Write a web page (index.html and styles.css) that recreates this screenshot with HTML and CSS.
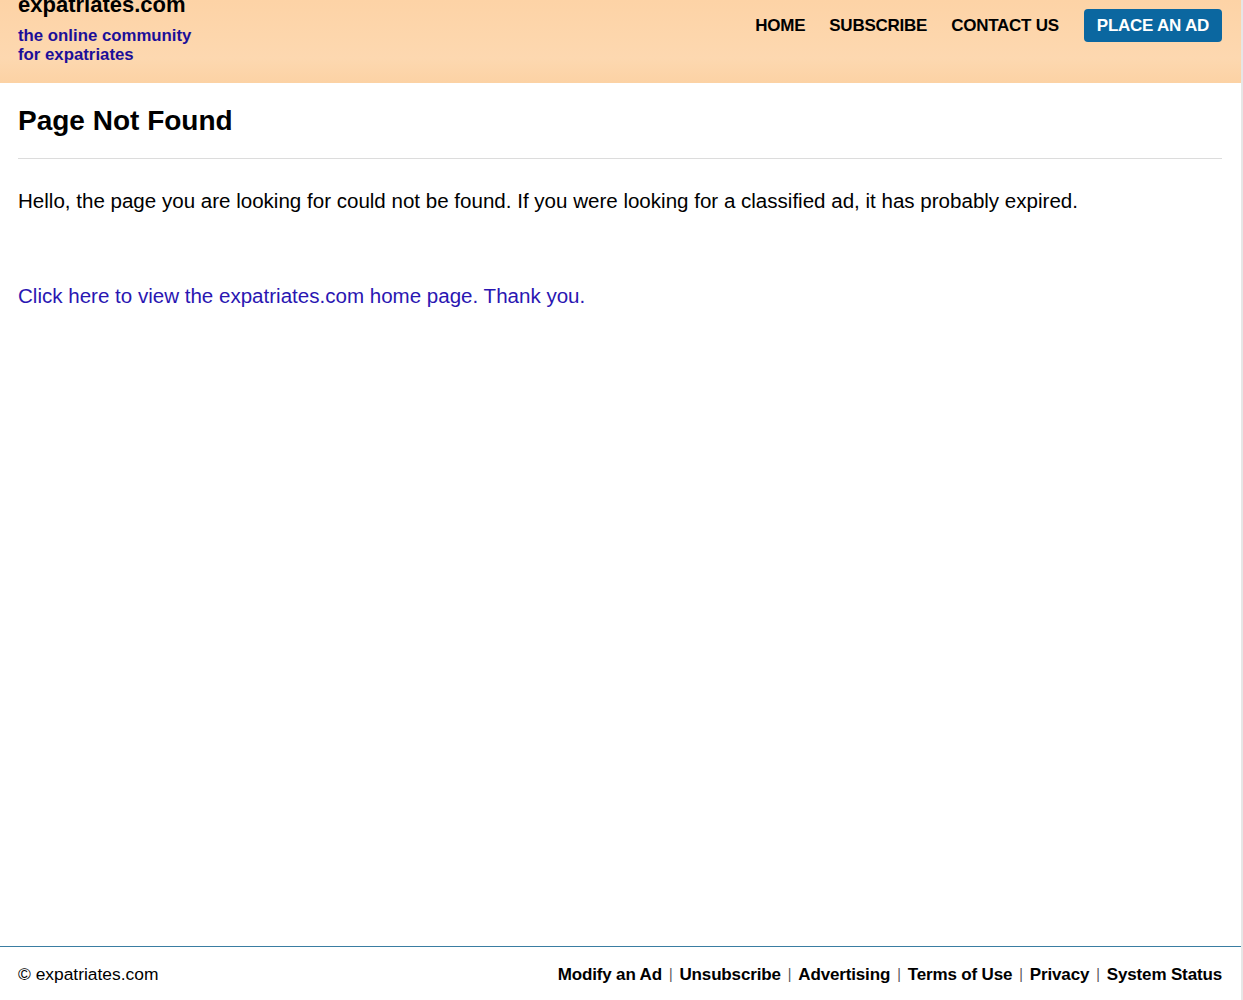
FILE: index.html
```html
<!DOCTYPE html>
<html lang="en">
<head>
    <meta charset="UTF-8">
    <meta name="viewport" content="width=device-width, initial-scale=1.0">
    <title>Page Not Found - expatriates.com</title>
    <link rel="stylesheet" href="styles.css">
</head>
<body>

    <!-- site header -->
    <header class="top-bar">
        <div class="brand">
            <a href="#" class="logo">expatriates.com</a>
            <div class="tagline">the online community<br>for expatriates</div>
        </div>
        <nav class="main-nav">
            <a href="#">HOME</a>
            <a href="#">SUBSCRIBE</a>
            <a href="#">CONTACT US</a>
            <a href="#" class="place-ad">PLACE AN AD</a>
        </nav>
    </header>

    <main class="content">
        <h1>Page Not Found</h1>
        <p class="message">Hello, the page you are looking for could not be found. If you were looking for a classified ad, it has probably expired.</p>
        <p class="home-link"><a href="#">Click here to view the expatriates.com home page. Thank you.</a></p>
    </main>

    <footer class="site-footer">
        <div class="copyright">&copy; expatriates.com</div>
        <div class="footer-links">
            <a href="#">Modify an Ad</a><span class="sep">|</span><a href="#">Unsubscribe</a><span class="sep">|</span><a href="#">Advertising</a><span class="sep">|</span><a href="#">Terms of Use</a><span class="sep">|</span><a href="#">Privacy</a><span class="sep">|</span><a href="#">System Status</a>
        </div>
    </footer>

</body>
</html>
```

FILE: styles.css
```css
html, body {
    margin: 0;
    padding: 0;
}
body {
    font-family: "Liberation Sans", Arial, Helvetica, sans-serif;
    color: #000;
    background: #fff;
    min-height: 100vh;
    display: flex;
    flex-direction: column;
    border-right: 2px solid #e6e6e6;
    box-sizing: border-box;
}
a {
    text-decoration: none;
}

/* header */
.top-bar {
    height: 83px;
    background: linear-gradient(to bottom, #fdd3a6, #fdd8b0 70%, #fcd2a4);
    display: flex;
    justify-content: space-between;
    align-items: flex-start;
    padding: 0 19px 0 18px;
    box-sizing: border-box;
    overflow: hidden;
}
.brand {
    margin-top: -10px;
}
.logo {
    display: block;
    color: #000;
    font-size: 22px;
    font-weight: bold;
    line-height: 30px;
    margin-bottom: 6px;
}
.tagline {
    color: #1c0f99;
    font-size: 16.8px;
    font-weight: bold;
    line-height: 19px;
}
.main-nav {
    display: flex;
    align-items: center;
    gap: 24px;
    margin-top: 9px;
}
.main-nav a {
    color: #000;
    font-size: 17px;
    font-weight: bold;
    letter-spacing: -0.25px;
}
.main-nav .place-ad {
    color: #fff;
    background: #0b67a0;
    border-radius: 4px;
    padding: 7px 13px;
    line-height: 19px;
    margin-left: 1px;
}

/* page body */
.content {
    flex: 1;
    padding: 0 19px 0 18px;
}
h1 {
    font-size: 28px;
    font-weight: bold;
    margin: 22px 0 0;
    padding-bottom: 21px;
    border-bottom: 1px solid #dcdcdc;
    line-height: 32px;
}
.message {
    font-size: 20.55px;
    margin: 30px 0 0;
    line-height: 24px;
}
.home-link {
    font-size: 20.55px;
    margin: 71px 0 0;
    line-height: 24px;
}
.home-link a {
    color: #2a16b2;
}

/* footer */
.site-footer {
    border-top: 1px solid #3a7da2;
    height: 54px;
    box-sizing: border-box;
    display: flex;
    justify-content: space-between;
    align-items: center;
    padding: 2px 19px 0 18px;
}
.copyright {
    font-size: 17.4px;
}
.footer-links {
    font-size: 17px;
    font-weight: bold;
    letter-spacing: -0.15px;
}
.footer-links a {
    color: #000;
}
.footer-links .sep {
    color: #555;
    font-weight: normal;
    font-size: 14px;
    margin: 0 7px;
    position: relative;
    top: -1px;
}
```
